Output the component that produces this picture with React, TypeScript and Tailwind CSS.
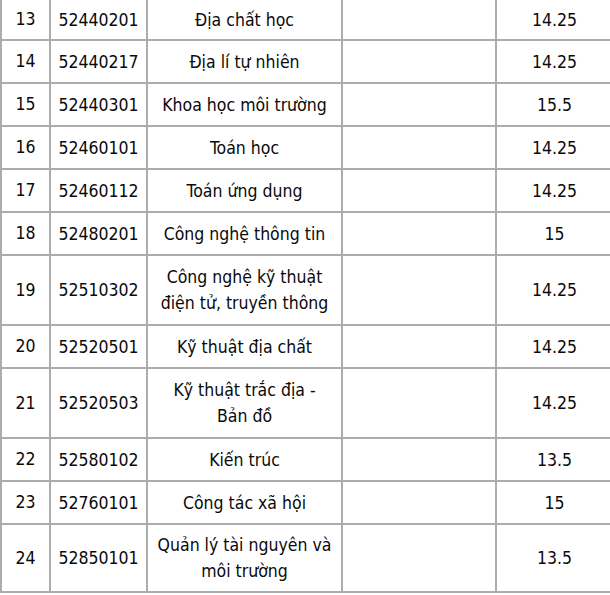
const rows: { no: string; code: string; name: string[]; score: string }[] = [
  { no: '13', code: '52440201', name: ['Địa chất học'], score: '14.25' },
  { no: '14', code: '52440217', name: ['Địa lí tự nhiên'], score: '14.25' },
  { no: '15', code: '52440301', name: ['Khoa học môi trường'], score: '15.5' },
  { no: '16', code: '52460101', name: ['Toán học'], score: '14.25' },
  { no: '17', code: '52460112', name: ['Toán ứng dụng'], score: '14.25' },
  { no: '18', code: '52480201', name: ['Công nghệ thông tin'], score: '15' },
  { no: '19', code: '52510302', name: ['Công nghệ kỹ thuật', 'điện tử, truyền thông'], score: '14.25' },
  { no: '20', code: '52520501', name: ['Kỹ thuật địa chất'], score: '14.25' },
  { no: '21', code: '52520503', name: ['Kỹ thuật trắc địa -', 'Bản đồ'], score: '14.25' },
  { no: '22', code: '52580102', name: ['Kiến trúc'], score: '13.5' },
  { no: '23', code: '52760101', name: ['Công tác xã hội'], score: '15' },
  { no: '24', code: '52850101', name: ['Quản lý tài nguyên và', 'môi trường'], score: '13.5' },
]

function Cell({ children }: { children?: React.ReactNode }) {
  return (
    <div className="bg-white flex flex-col items-center justify-center text-center leading-[26px]">
      {children}
    </div>
  )
}

export default function App() {
  return (
    <div className="w-[610px] h-[595px] overflow-hidden bg-white">
      <div
        className="w-[614px] grid grid-cols-[47px_95px_193px_152px_115px] gap-[2px] bg-[#acacac] pl-[2px] pb-[2px] text-[17.5px] text-[#0a0a0a] font-['DejaVu_Sans_Condensed',sans-serif]"
      >
        {rows.map((r, i) => {
          const h =
            i === 0
              ? 'h-[39px]'
              : r.name.length > 1
              ? i === rows.length - 1
                ? 'h-[66px]'
                : 'h-[68px]'
              : 'h-[41px]'
          return (
            <div key={r.no} className="contents">
              <div className={`${h} bg-white flex items-center justify-center`}>{r.no}</div>
              <Cell>{r.code}</Cell>
              <Cell>
                {r.name.map((n) => (
                  <span key={n}>{n}</span>
                ))}
              </Cell>
              <Cell />
              <Cell>{r.score}</Cell>
            </div>
          )
        })}
      </div>
    </div>
  )
}
